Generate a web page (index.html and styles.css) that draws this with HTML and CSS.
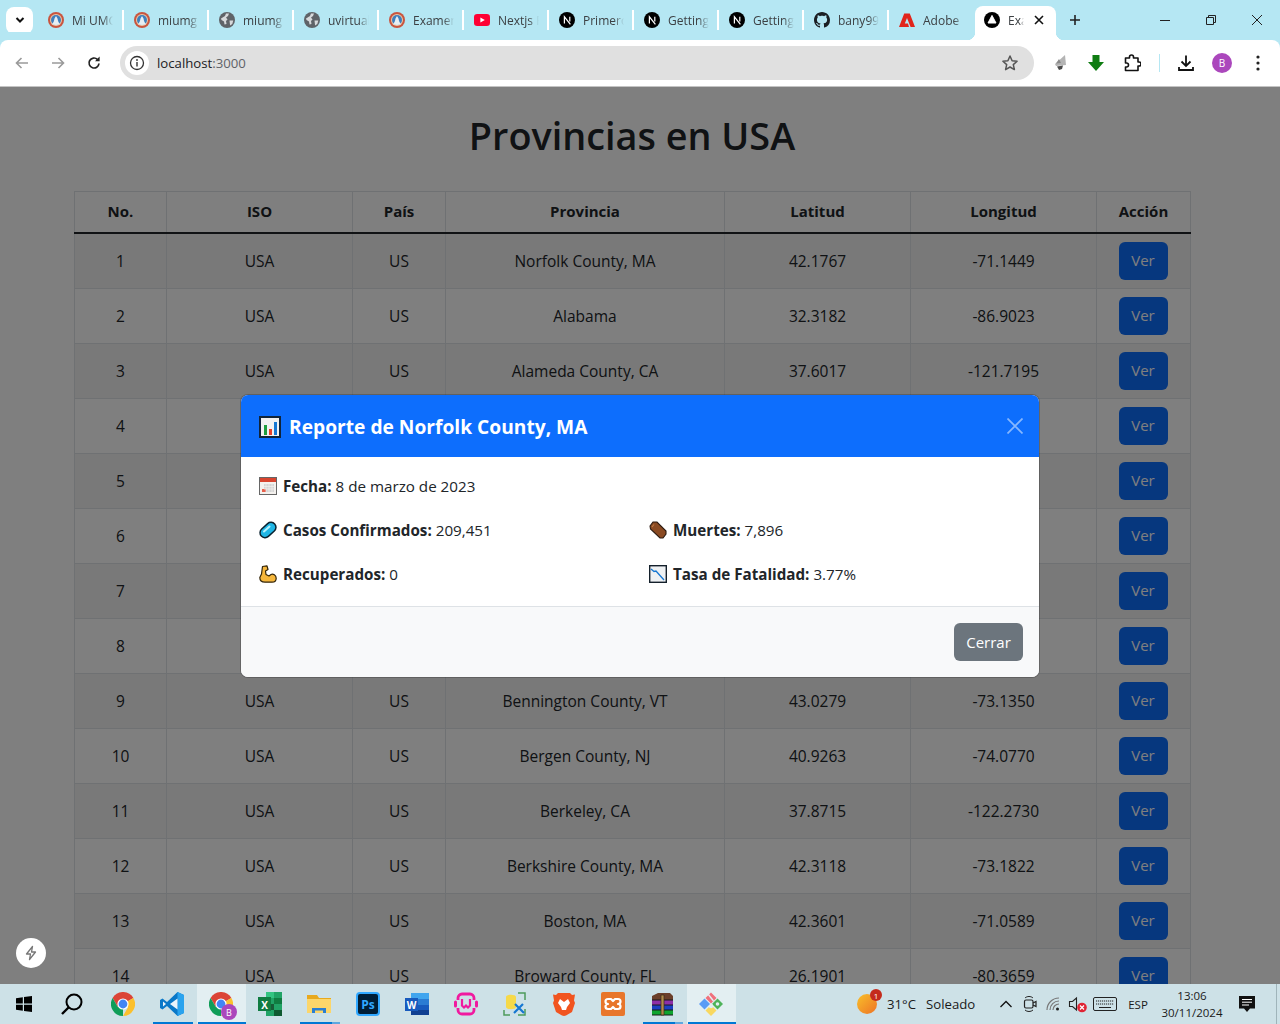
FILE: index.html
```html
<!DOCTYPE html>
<html lang="es">
<head>
    <meta charset="UTF-8">
    <meta name="viewport" content="width=device-width, initial-scale=1.0">
    <title>Provincias en USA</title>
    <link rel="stylesheet" href="styles.css">
</head>
<body>
    <svg class="sprites" aria-hidden="true">
        <symbol id="fav-umg" viewBox="0 0 16 16">
            <circle cx="8" cy="8" r="8" fill="#c9553f"/>
            <circle cx="8" cy="8" r="6" fill="#e9c9a8"/>
            <circle cx="8" cy="8" r="5" fill="#3f7fbd"/>
            <path d="M4 12c1.500-1 2-3 2.500-5.500L8 4l1.500 2.500C10 9 10.500 11 12 12c-2.500 1.300-5.500 1.300-8 0z" fill="#e8eef2"/>
        </symbol>
        <symbol id="fav-globe" viewBox="0 0 16 16">
            <circle cx="8" cy="8" r="8" fill="#5f6368"/>
            <path d="M2 6.500 6 4 7 1.500 10 1.600 9 4 7 5.500 8.500 7.500 7 9 7.500 12 5.500 12.500 5 9.500 2.500 8zM10.500 8.500h3.800l-1 3.400-2.200 1.600z" fill="#d7d9db"/>
        </symbol>
        <symbol id="fav-yt" viewBox="0 0 16 16">
            <rect y="2" width="16" height="12" rx="3.200" fill="#ff0033"/>
            <path d="M6.400 5.400 10.800 8l-4.400 2.600z" fill="#fff"/>
        </symbol>
        <symbol id="fav-next" viewBox="0 0 16 16">
            <circle cx="8" cy="8" r="8" fill="#000"/>
            <path d="M5.400 11.400V4.800l6 7.600M10.800 4.800v4.600" fill="none" stroke="#fff" stroke-width="1.200"/>
        </symbol>
        <symbol id="fav-github" viewBox="0 0 16 16">
            <path d="M8 0C3.58 0 0 3.58 0 8c0 3.54 2.29 6.53 5.47 7.59.4.07.55-.17.55-.38 0-.19-.01-.82-.01-1.49-2.01.37-2.53-.49-2.69-.94-.09-.23-.48-.94-.82-1.13-.28-.15-.68-.52-.01-.53.63-.01 1.08.58 1.23.82.72 1.21 1.87.87 2.33.66.07-.52.28-.87.51-1.07-1.78-.2-3.64-.89-3.64-3.95 0-.87.31-1.59.82-2.15-.08-.2-.36-1.02.08-2.12 0 0 .67-.21 2.2.82.64-.18 1.32-.27 2-.27.68 0 1.36.09 2 .27 1.53-1.04 2.2-.82 2.2-.82.44 1.1.16 1.92.08 2.12.51.56.82 1.27.82 2.15 0 3.07-1.87 3.75-3.65 3.95.29.25.54.73.54 1.48 0 1.07-.01 1.93-.01 2.2 0 .21.15.46.55.38A8.013 8.013 0 0016 8c0-4.42-3.58-8-8-8z" fill="#1b1f23"/>
        </symbol>
        <symbol id="fav-adobe" viewBox="0 0 16 16">
            <path d="M5.200 1.500h5.600L16 15h-4.400L8 6 5.800 11.500H9l1 3.500H0z" fill="#e1251b"/>
        </symbol>
        <symbol id="fav-active" viewBox="0 0 16 16">
            <circle cx="8" cy="8" r="8" fill="#000"/>
            <path d="M8 3.400 12 11H4z" fill="#fff" stroke="#fff" stroke-linejoin="round"/>
        </symbol>
        <symbol id="chrome" viewBox="0 0 24 24">
            <path d="M12 12 22.400 6A12 12 0 0 0 1.600 6L6.800 15z" fill="#db4437"/>
            <path d="M12 12 6.800 15 1.600 6A12 12 0 0 0 12 24z" fill="#0f9d58"/>
            <path d="M12 12 22.400 6A12 12 0 0 1 12 24l5.200-9z" fill="#fbc02d"/>
            <circle cx="12" cy="12" r="5.600" fill="#fff"/>
            <circle cx="12" cy="12" r="4.400" fill="#4285f4"/>
        </symbol>
    </svg>

    <header class="tabstrip">
        <button class="tab-search">
            <svg width="12" height="12" viewBox="0 0 12 12"><path d="M2.500 4 6 7.500 9.500 4" fill="none" stroke="#111" stroke-width="2"/></svg>
        </button>
        <div class="tab tab-first"><svg class="favicon"><use href="#fav-umg"/></svg><span class="tab-title">Mi UMG</span></div>
        <div class="tab"><svg class="favicon"><use href="#fav-umg"/></svg><span class="tab-title">miumg</span></div>
        <div class="tab"><svg class="favicon"><use href="#fav-globe"/></svg><span class="tab-title">miumg</span></div>
        <div class="tab"><svg class="favicon"><use href="#fav-globe"/></svg><span class="tab-title">uvirtual</span></div>
        <div class="tab"><svg class="favicon"><use href="#fav-umg"/></svg><span class="tab-title">Examen</span></div>
        <div class="tab"><svg class="favicon"><use href="#fav-yt"/></svg><span class="tab-title">Nextjs Fu</span></div>
        <div class="tab"><svg class="favicon"><use href="#fav-next"/></svg><span class="tab-title">Primeros</span></div>
        <div class="tab"><svg class="favicon"><use href="#fav-next"/></svg><span class="tab-title">Getting</span></div>
        <div class="tab"><svg class="favicon"><use href="#fav-next"/></svg><span class="tab-title">Getting</span></div>
        <div class="tab"><svg class="favicon"><use href="#fav-github"/></svg><span class="tab-title">bany99</span></div>
        <div class="tab tab-last"><svg class="favicon"><use href="#fav-adobe"/></svg><span class="tab-title">Adobe</span></div>
        <div class="tab-active">
            <svg class="favicon"><use href="#fav-active"/></svg>
            <span class="tab-title tab-title-short">Exa</span>
            <svg class="tab-close" width="10" height="10" viewBox="0 0 10 10"><path d="M1 1l8 8M9 1 1 9" stroke="#111" stroke-width="1.600"/></svg>
        </div>
        <svg class="new-tab" width="12" height="12" viewBox="0 0 12 12"><path d="M6 1v10M1 6h10" stroke="#222" stroke-width="1.600"/></svg>
        <div class="window-controls">
            <svg width="46" height="12" viewBox="0 0 46 12"><path d="M18 6.500h10" stroke="#222"/></svg>
            <svg width="46" height="12" viewBox="0 0 46 12"><path d="M18.500 3.500h7v7h-7zM20.500 3.500v-2h7v7h-2" fill="none" stroke="#222"/></svg>
            <svg width="46" height="12" viewBox="0 0 46 12"><path d="M18 1l10 10M28 1 18 11" stroke="#222"/></svg>
        </div>
    </header>

    <nav class="toolbar">
        <button class="tool"><svg width="16" height="16" viewBox="0 0 16 16"><path d="M14 8H3M7.500 3 2.500 8l5 5" fill="none" stroke="#9a9a9a" stroke-width="1.600"/></svg></button>
        <button class="tool"><svg width="16" height="16" viewBox="0 0 16 16"><path d="M2 8h11M8.500 3l5 5-5 5" fill="none" stroke="#9a9a9a" stroke-width="1.600"/></svg></button>
        <button class="tool"><svg width="16" height="16" viewBox="0 0 16 16"><path d="M13 8.500A5 5 0 1 1 11.400 4.300" fill="none" stroke="#222" stroke-width="1.700"/><path d="M13.600 1.600v4.600H9z" fill="#222"/></svg></button>
        <div class="omnibox">
            <span class="site-info">
                <svg width="16" height="16" viewBox="0 0 16 16"><circle cx="8" cy="8" r="6.500" fill="none" stroke="#333" stroke-width="1.300"/><path d="M8 7v4.400" stroke="#333" stroke-width="1.400"/><circle cx="8" cy="5" r=".9" fill="#333"/></svg>
            </span>
            <span class="url">localhost<span class="url-port">:3000</span></span>
            <svg class="star" width="18" height="18" viewBox="0 0 18 18"><path d="m9 2 2.100 4.700 5 .5-3.800 3.400 1.100 5L9 13l-4.400 2.600 1.100-5L1.900 7.200l5-.5z" fill="none" stroke="#555" stroke-width="1.500" stroke-linejoin="round"/></svg>
        </div>
        <button class="tool tool-first"><svg width="18" height="18" viewBox="0 0 18 18"><path d="M13 1 3 10l1 2 10-1z" fill="#b4b4b4"/><path d="M7 5 4 9.500l5-.5z" fill="#8a8a8a"/><path d="M5 12.500l6-1-1 3.500-3 1z" fill="#4a4a4a"/></svg></button>
        <button class="tool"><svg width="18" height="18" viewBox="0 0 18 18"><path d="M5.500 1h7v7H17l-8 9-8-9h4.500z" fill="#0f7d12"/></svg></button>
        <button class="tool"><svg width="18" height="18" viewBox="0 0 18 18"><path d="M2.500 4H6.500V3a2 2 0 0 1 4 0v1h4.500v4h1a2 2 0 0 1 0 4h-1v4.500H2.500v-3.500h1a2 2 0 0 0 0-4h-1z" fill="none" stroke="#111" stroke-width="1.600" stroke-linejoin="round"/></svg></button>
        <span class="tool-sep"></span>
        <button class="tool"><svg width="18" height="18" viewBox="0 0 18 18"><path d="M9 1.500v10M4.500 7.500 9 12l4.500-4.500" fill="none" stroke="#111" stroke-width="1.800"/><path d="M2 13v3h14v-3" fill="none" stroke="#111" stroke-width="1.800"/></svg></button>
        <button class="tool"><span class="avatar">B</span></button>
        <button class="tool"><svg width="4" height="16" viewBox="0 0 4 16"><circle cx="2" cy="2" r="1.600" fill="#222"/><circle cx="2" cy="8" r="1.600" fill="#222"/><circle cx="2" cy="14" r="1.600" fill="#222"/></svg></button>
    </nav>

    <main class="viewport">
        <div class="page">
            <h1 class="page-title">Provincias en USA</h1>
            <table class="table">
                <colgroup>
                    <col class="col-no">
                    <col class="col-m">
                    <col class="col-s">
                    <col class="col-l">
                    <col class="col-m">
                    <col class="col-m">
                    <col class="col-action">
                </colgroup>
                <thead>
                    <tr><th>No.</th><th>ISO</th><th>País</th><th>Provincia</th><th>Latitud</th><th>Longitud</th><th>Acción</th></tr>
                </thead>
                <tbody>
                    <tr><td>1</td><td>USA</td><td>US</td><td>Norfolk County, MA</td><td>42.1767</td><td>-71.1449</td><td><button class="btn-ver">Ver</button></td></tr>
                    <tr><td>2</td><td>USA</td><td>US</td><td>Alabama</td><td>32.3182</td><td>-86.9023</td><td><button class="btn-ver">Ver</button></td></tr>
                    <tr><td>3</td><td>USA</td><td>US</td><td>Alameda County, CA</td><td>37.6017</td><td>-121.7195</td><td><button class="btn-ver">Ver</button></td></tr>
                    <!-- filas 4 a 8 quedan tapadas por el modal -->
                    <tr><td>4</td><td></td><td></td><td></td><td></td><td></td><td><button class="btn-ver">Ver</button></td></tr>
                    <tr><td>5</td><td></td><td></td><td></td><td></td><td></td><td><button class="btn-ver">Ver</button></td></tr>
                    <tr><td>6</td><td></td><td></td><td></td><td></td><td></td><td><button class="btn-ver">Ver</button></td></tr>
                    <tr><td>7</td><td></td><td></td><td></td><td></td><td></td><td><button class="btn-ver">Ver</button></td></tr>
                    <tr><td>8</td><td></td><td></td><td></td><td></td><td></td><td><button class="btn-ver">Ver</button></td></tr>
                    <tr><td>9</td><td>USA</td><td>US</td><td>Bennington County, VT</td><td>43.0279</td><td>-73.1350</td><td><button class="btn-ver">Ver</button></td></tr>
                    <tr><td>10</td><td>USA</td><td>US</td><td>Bergen County, NJ</td><td>40.9263</td><td>-74.0770</td><td><button class="btn-ver">Ver</button></td></tr>
                    <tr><td>11</td><td>USA</td><td>US</td><td>Berkeley, CA</td><td>37.8715</td><td>-122.2730</td><td><button class="btn-ver">Ver</button></td></tr>
                    <tr><td>12</td><td>USA</td><td>US</td><td>Berkshire County, MA</td><td>42.3118</td><td>-73.1822</td><td><button class="btn-ver">Ver</button></td></tr>
                    <tr><td>13</td><td>USA</td><td>US</td><td>Boston, MA</td><td>42.3601</td><td>-71.0589</td><td><button class="btn-ver">Ver</button></td></tr>
                    <tr><td>14</td><td>USA</td><td>US</td><td>Broward County, FL</td><td>26.1901</td><td>-80.3659</td><td><button class="btn-ver">Ver</button></td></tr>
                </tbody>
            </table>
        </div>

        <div class="backdrop"></div>

        <section class="modal">
            <header class="modal-header">
                <h2 class="modal-title">
                    <svg class="emoji-title" width="22" height="22" viewBox="0 0 22 22"><rect x="1" y="1" width="20" height="20" fill="#f2f2f2" stroke="#10243a" stroke-width="2"/><path d="M5 9h3v10H5z" fill="#1e9e3e"/><path d="M10 13h3v6h-3z" fill="#e8412a"/><path d="M15 6h3v13h-3z" fill="#1677d2"/></svg>
                    Reporte de Norfolk County, MA
                </h2>
                <svg class="modal-close" width="16" height="16" viewBox="0 0 16 16"><path d="M.5.5l15 15M15.500.5l-15 15" stroke="#fff" stroke-width="1.700"/></svg>
            </header>
            <div class="modal-body">
                <p class="stat stat-wide">
                    <svg class="emoji" width="18" height="18" viewBox="0 0 18 18"><rect x=".5" y=".5" width="17" height="17" fill="#f4f1ee" stroke="#666"/><rect x="1" y="1" width="16" height="4" fill="#d8442f"/><path d="M5 7h10v8H5z" fill="#d5d5d5"/><path d="M3 12h4v3H3z" fill="#e8604c"/><path d="M7 7v8M10 7v8M13 7v8M5 9.500h10M5 12h10" stroke="#f4f1ee" stroke-width=".7"/></svg><strong>Fecha:</strong> 8 de marzo de 2023
                </p>
                <p class="stat">
                    <svg class="emoji" width="18" height="18" viewBox="0 0 18 18"><rect x="0" y="4" width="18" height="10" rx="5" transform="rotate(-42 9 9)" fill="#1fb6e6" stroke="#0a2230" stroke-width="1.500"/><path d="M5 10.500 10.500 5.500" stroke="#b4f0fc" stroke-width="2" stroke-linecap="round"/></svg><strong>Casos Confirmados:</strong> 209,451
                </p>
                <p class="stat">
                    <svg class="emoji" width="18" height="18" viewBox="0 0 18 18"><path d="M1 5 4 1h4l9 9v3l-3 4h-3L1.500 8z" fill="#8a4a22" stroke="#2b1a10" stroke-width="1.100"/><path d="M5 3.500 3 6" stroke="#c07a44" stroke-width="1.200"/></svg><strong>Muertes:</strong> 7,896
                </p>
                <p class="stat">
                    <svg class="emoji" width="18" height="18" viewBox="0 0 18 18"><path d="M8 .8 3.500 1.500 2.500 9 .8 12.500C.8 15.500 3 17.200 6 17.200h7c3 0 4.200-2 4.200-4 0-3-3.200-4.700-5.200-3.700L10 11 7 9.500 6.500 6 9 4.500z" fill="#f6b73c" stroke="#33250a" stroke-width="1.200" stroke-linejoin="round"/></svg><strong>Recuperados:</strong> 0
                </p>
                <p class="stat">
                    <svg class="emoji" width="18" height="18" viewBox="0 0 18 18"><rect x=".7" y=".7" width="16.600" height="16.600" fill="#eef1f3" stroke="#14202b" stroke-width="1.400"/><path d="M2 4 5 6.500 7 6 15 15" fill="none" stroke="#1677d2" stroke-width="1.300"/></svg><strong>Tasa de Fatalidad:</strong> 3.77%
                </p>
            </div>
            <footer class="modal-footer">
                <button class="btn-close-modal">Cerrar</button>
            </footer>
        </section>

        <div class="dev-indicator">
            <svg width="16" height="16" viewBox="0 0 16 16"><path d="M9.500 1.500 3.500 9h4l-1 5.500L12.500 7h-4z" fill="none" stroke="#777" stroke-width="1.300" stroke-linejoin="round"/></svg>
        </div>
    </main>

    <footer class="taskbar">
        <div class="task task-start"><svg width="18" height="18" viewBox="0 0 18 18"><path d="M1 3.300 7.800 2.300v6.200H1zM9 2.100 17 1v7.500H9zM1 9.700h6.800v6.100L1 14.800zM9 9.700h8V17l-8-1.100z" fill="#000"/></svg></div>
        <div class="task task-start"><svg width="24" height="24" viewBox="0 0 24 24"><circle cx="14" cy="10" r="7.500" fill="none" stroke="#000" stroke-width="2"/><path d="M8.500 15.500 2 22" stroke="#000" stroke-width="2.400"/></svg></div>
        <div class="task task-first"><svg width="24" height="24"><use href="#chrome"/></svg></div>
        <div class="task task-open"><svg width="24" height="24" viewBox="0 0 24 24"><path d="M17.500 0 24 3v18l-6.500 3L7 14 2.500 17.500 0 16V8l2.500-1.500L7 10z" fill="#0a78c8"/><path d="M17.500 0 24 3v18l-6.500 3z" fill="#2aa3ee"/><path d="M17.500 6.500v11L10 12z" fill="#fff" fill-opacity=".92"/><path d="M3 9.500v5L6 12z" fill="#fff" fill-opacity=".92"/></svg></div>
        <div class="task task-active">
            <span class="task-badged"><svg width="24" height="24"><use href="#chrome"/></svg><span class="avatar avatar-small">B</span></span>
        </div>
        <div class="task"><svg width="24" height="24" viewBox="0 0 24 24"><path d="M8 0h16v24H8z" fill="#21a366"/><path d="M8 0h8v6H8z" fill="#33c481"/><path d="M16 6h8v6h-8z" fill="#107c41"/><path d="M8 12h8v6H8z" fill="#185c37"/><path d="M16 18h8v6h-8z" fill="#0f5a30"/><rect y="5" width="13" height="14" fill="#107c41"/><text class="icon-letter" x="6.500" y="16.500">X</text></svg></div>
        <div class="task task-stacked"><svg width="24" height="24" viewBox="0 0 24 24"><path d="M0 3h10l2 3h12v15H0z" fill="#e8a91e"/><path d="M0 7h24v14H0z" fill="#fcd66a"/><path d="M5 16h14v5h-3v-2.500H8V21H5z" fill="#2a7fd1"/></svg></div>
        <div class="task"><svg width="24" height="24" viewBox="0 0 24 24"><rect x="1" y="1" width="22" height="22" rx="3" fill="#001e36" stroke="#31a8ff" stroke-width="2"/><text class="icon-letter icon-ps" x="12" y="17">Ps</text></svg></div>
        <div class="task"><svg width="24" height="24" viewBox="0 0 24 24"><path d="M6 1h18v22H6z" fill="#2b7cd3"/><path d="M6 1h18v6H6z" fill="#41a5ee"/><path d="M6 13h18v5H6z" fill="#185abd"/><path d="M6 18h18v5H6z" fill="#103f91"/><rect y="6" width="13" height="13" fill="#185abd"/><text class="icon-letter" x="6.500" y="17">W</text></svg></div>
        <div class="task"><svg width="24" height="24" viewBox="0 0 24 24"><path d="M4 8V6a4 4 0 0 1 4-4h8a4 4 0 0 1 4 4v2M4 16v2a4 4 0 0 0 4 4h8a4 4 0 0 0 4-4v-2" fill="none" stroke="#f0199f" stroke-width="2.800"/><path d="M1.500 10v4M22.500 10v4" stroke="#f0199f" stroke-width="3" stroke-linecap="round"/><path d="M8 7v6.500l2 2 2-2 2 2 2-2V7" fill="none" stroke="#f0199f" stroke-width="2.200"/></svg></div>
        <div class="task"><svg width="24" height="24" viewBox="0 0 24 24"><path d="M3 5c0-3 10-3 10 0v10c0 3-10 3-10 0z" fill="#f6d94a"/><path d="M15 1h7v7M22 17v6h-7M1 18v5h6" fill="none" stroke="#4d9a5c" stroke-width="1.500"/><path d="M11 21l9-9M12 12l9 9" stroke="#1677d2" stroke-width="2.200"/></svg></div>
        <div class="task"><svg width="22" height="24" viewBox="0 0 22 24"><path d="M5 1h12l2 2 3-.5-1 6L22 11l-3 9-6 3.500L11 24l-2-.5L3 20 0 11l1-2.500-1-6L3 3z" fill="#f1541f"/><path d="M11 10 7 7l-2 4 3 4 1 3h4l1-3 3-4-2-4z" fill="#fff"/></svg></div>
        <div class="task"><svg width="24" height="24" viewBox="0 0 24 24"><rect width="24" height="24" rx="2" fill="#e8762b"/><path d="M10 7H7a2.500 2.500 0 0 0 0 5 2.500 2.500 0 0 0 0 5h3l2-2 2 2h3a2.500 2.500 0 0 0 0-5 2.500 2.500 0 0 0 0-5h-3l-2 2z" fill="none" stroke="#fff" stroke-width="2.200" stroke-linejoin="round"/></svg></div>
        <div class="task task-stacked"><svg width="24" height="24" viewBox="0 0 24 24"><path d="M2 4 8 1h12l3 3v4H2z" fill="#6b3f2a"/><path d="M2 8h21v5H2z" fill="#8d2fa8"/><path d="M2 13h21v5H2z" fill="#1b3fc4"/><path d="M2 18h21v5H2z" fill="#0ea52f"/><path d="M2 8h21M2 13h21M2 18h21M2 23h21" stroke="#1a1a1a"/><path d="M11 3h3v20h-3z" fill="#b08a4a" stroke="#3a2a18" stroke-width=".7"/></svg></div>
        <div class="task task-active"><svg width="26" height="26" viewBox="0 0 26 26"><path d="m14 13 5.500-5.500L25 13l-5.500 5.500z" fill="#4fb35a"/><circle cx="19.500" cy="13" r="1.800" fill="#e3eff2"/><path d="m7.500 7 5.500-5.500L18.500 7 13 12.500z" fill="#f0707c"/><path d="m10 3 5.500 7" stroke="#e3eff2" stroke-width="1.400"/><path d="m13 14 5.500 5.500L13 25l-5.500-5.500z" fill="#f8d860"/><circle cx="13" cy="15" r="2.200" fill="#e3eff2"/><path d="m6.500 7.500L12 13l-5.500 5.500L1 13z" fill="#5b9cf5"/></svg></div>

        <div class="tray">
            <div class="weather">
                <span class="weather-orb"><span class="weather-badge">1</span></span>
                <span>31°C</span>
                <span>Soleado</span>
            </div>
            <div class="tray-icon"><svg width="14" height="14" viewBox="0 0 14 14"><path d="M1.500 10 7 4.500l5.500 5.500" fill="none" stroke="#111" stroke-width="1.300"/></svg></div>
            <div class="tray-icon"><svg width="16" height="18" viewBox="0 0 16 18"><path d="M3 3c2-2 6-2 8 0M3 15c2 2 6 2 8 0" fill="none" stroke="#222"/><rect x="2.500" y="5" width="8.500" height="8" rx="1.500" fill="none" stroke="#222" stroke-width="1.200"/><path d="M11 8l3-1.500v5L11 10" fill="none" stroke="#222" stroke-width="1.200"/></svg></div>
            <div class="tray-icon"><svg width="18" height="16" viewBox="0 0 18 16"><path d="M2 14A12 12 0 0 1 14 2M5 14a9 9 0 0 1 9-9M8 14a6 6 0 0 1 6-6" fill="none" stroke="#777" stroke-width="1.200"/><circle cx="12.500" cy="13" r="1.500" fill="#222"/></svg></div>
            <div class="tray-icon tray-volume"><svg width="20" height="18" viewBox="0 0 20 18"><path d="M1.500 6.500h3L8.500 3v12l-4-3.500h-3z" fill="none" stroke="#222" stroke-width="1.100"/><circle cx="14" cy="12.500" r="4.800" fill="#e02434"/><path d="m12 10.500 4 4M16 10.500l-4 4" stroke="#fff" stroke-width="1.200"/></svg></div>
            <div class="tray-icon tray-keyboard"><svg width="24" height="14" viewBox="0 0 24 14"><rect x=".5" y=".5" width="23" height="13" rx="1.500" fill="none" stroke="#222"/><path d="M3 4h18M3 7h18" stroke="#222" stroke-dasharray="1.200 .8"/><path d="M6 10.500h12" stroke="#222"/></svg></div>
            <div class="tray-lang">ESP</div>
            <div class="tray-clock"><span>13:06</span><span>30/11/2024</span></div>
            <div class="tray-notify"><svg width="18" height="18" viewBox="0 0 18 18"><path d="M1 1h16v12.500h-5L9 17l-3-3.500H1z" fill="#111"/><path d="M4 4.500h10M4 7.200h10M4 10h7" stroke="#fff"/></svg></div>
            <div class="show-desktop"></div>
        </div>
    </footer>
</body>
</html>
```

FILE: styles.css
```css
* {
    box-sizing: border-box;
}

html, body {
    height: 100%;
}

body {
    margin: 0;
    height: 100vh;
    display: flex;
    flex-direction: column;
    overflow: hidden;
    font-family: "Open Sans", "Noto Sans", sans-serif;
    color: #212529;
    background-color: #fff;
}

button {
    font-family: inherit;
    border: none;
    background: none;
    padding: 0;
}

.sprites {
    display: none;
}

/* browser chrome */

.tabstrip {
    height: 40px;
    flex: none;
    display: flex;
    align-items: center;
    background-color: #b5e7f3;
}

.tab-search {
    width: 27px;
    height: 27px;
    margin-left: 6px;
    margin-right: 5px;
    border-radius: 8px;
    background-color: #fff;
    display: flex;
    align-items: center;
    justify-content: center;
}

.tab {
    width: 85px;
    height: 20px;
    display: flex;
    align-items: center;
    gap: 8px;
    padding-left: 10px;
    border-right: 2px solid #fff;
}

.tab-first {
    width: 86px;
}

.tab-last {
    border-right: none;
}

.favicon {
    width: 16px;
    height: 16px;
    flex: none;
}

.tab-title {
    width: 41px;
    flex: none;
    overflow: hidden;
    white-space: nowrap;
    font-size: 12px;
    color: #3c4043;
    -webkit-mask-image: linear-gradient(to right, #000 75%, transparent);
    mask-image: linear-gradient(to right, #000 75%, transparent);
}

.tab-title-short {
    width: 16px;
}

.tab-active {
    position: relative;
    width: 81px;
    height: 34px;
    align-self: flex-end;
    margin-left: 1px;
    padding: 0 0 6px 9px;
    display: flex;
    align-items: center;
    gap: 8px;
    background-color: #fff;
    border-radius: 8px 8px 0 0;
}

.tab-active::before,
.tab-active::after {
    content: "";
    position: absolute;
    bottom: 0;
    width: 8px;
    height: 8px;
}

.tab-active::before {
    left: -8px;
    background: radial-gradient(circle at 0 0, transparent 8px, #fff 8.5px);
}

.tab-active::after {
    right: -8px;
    background: radial-gradient(circle at 100% 0, transparent 8px, #fff 8.5px);
}

.tab-close {
    margin-left: 2px;
}

.new-tab {
    margin-left: 13px;
}

.window-controls {
    margin-left: auto;
    display: flex;
}

.toolbar {
    height: 47px;
    flex: none;
    display: flex;
    align-items: center;
    padding: 0 4px 1px;
    background-color: #fff;
    border-bottom: 1px solid #c4c4c4;
    border-radius: 8px 8px 0 0;
}

.tabstrip + .toolbar {
    box-shadow: 0 -8px 0 #b5e7f3;
}

.tool {
    width: 36px;
    height: 34px;
    flex: none;
    display: flex;
    align-items: center;
    justify-content: center;
}

.tool-first {
    margin-left: 9px;
    margin-right: -1px;
}

.tool-sep {
    width: 1px;
    height: 18px;
    margin: 0 8px 0 9px;
    flex: none;
    background-color: #b5e7f3;
}

.omnibox {
    flex: 1;
    height: 34px;
    margin-left: 8px;
    display: flex;
    align-items: center;
    padding: 0 15px 0 5px;
    border-radius: 17px;
    background-color: #e0e0e0;
}

.site-info {
    width: 24px;
    height: 24px;
    display: flex;
    align-items: center;
    justify-content: center;
    border-radius: 50%;
    background-color: #fff;
}

.url {
    margin-left: 8px;
    font-size: 13.2px;
    color: #202124;
}

.url-port {
    color: #5f6368;
}

.star {
    margin-left: auto;
}

.avatar {
    width: 20px;
    height: 20px;
    display: flex;
    align-items: center;
    justify-content: center;
    border-radius: 50%;
    font-size: 10px;
    color: #fff;
    background-color: #ab47bc;
}

/* page */

.viewport {
    position: relative;
    flex: 1;
    min-height: 0;
    overflow: hidden;
}

.page {
    padding: 0 90px 0 74px;
}

.page-title {
    margin: 0;
    padding: 25px 0 31px;
    font-size: 37.8px;
    line-height: 48px;
    font-weight: 600;
    text-align: center;
}

.table {
    width: 100%;
    table-layout: fixed;
    border-collapse: collapse;
    font-size: 15.5px;
}

.col-no {
    width: 92px;
}

.col-s {
    width: 93px;
}

.col-m {
    width: 186px;
}

.col-l {
    width: 279px;
}

.col-action {
    width: 94px;
}

.table th,
.table td {
    padding: 8px;
    border: 1px solid #dee2e6;
    text-align: center;
    vertical-align: middle;
    line-height: 24px;
}

.table th {
    padding: 7px 8px 9px;
    border-bottom: 2px solid #212529;
    font-size: 15px;
    font-weight: 700;
}

.table td {
    height: 55px;
}

.table tbody tr:nth-child(odd) td {
    background-color: #f2f2f2;
}

.btn-ver {
    width: 49px;
    height: 38px;
    margin-right: 1px;
    padding-bottom: 2px;
    border-radius: 6px;
    font-size: 15px;
    color: #fff;
    background-color: #0d6efd;
    vertical-align: middle;
}

.backdrop {
    position: absolute;
    inset: 0;
    background-color: rgba(0, 0, 0, 0.5);
}

.modal {
    position: absolute;
    top: 307px;
    left: 240px;
    width: 800px;
    overflow: hidden;
    border: 1px solid rgba(0, 0, 0, 0.2);
    border-radius: 8px;
    background-color: #fff;
    background-clip: padding-box;
}

.modal-header {
    height: 62px;
    display: flex;
    align-items: center;
    justify-content: space-between;
    padding: 0 16px 0 18px;
    background-color: #0d6efd;
}

.modal-title {
    margin: 0;
    padding-top: 1px;
    display: flex;
    align-items: center;
    gap: 8px;
    font-size: 19.2px;
    line-height: 24px;
    font-weight: 700;
    color: #fff;
}

.modal-close {
    opacity: 0.5;
}

.modal-body {
    display: grid;
    grid-template-columns: 390px 1fr;
    row-gap: 20px;
    padding: 17px 18px 20px;
    font-size: 15.2px;
    line-height: 24px;
}

.stat {
    margin: 0;
    white-space: nowrap;
}

.stat-wide {
    grid-column: 1 / -1;
}

.stat strong {
    font-weight: 700;
}

.emoji {
    margin-right: 6px;
    vertical-align: -3px;
}

.modal-footer {
    display: flex;
    justify-content: flex-end;
    padding: 16px;
    background-color: #f8f9fa;
    border-top: 1px solid #dee2e6;
}

.btn-close-modal {
    width: 69px;
    height: 38px;
    border-radius: 6px;
    font-size: 15px;
    color: #fff;
    background-color: #6c757d;
}

.dev-indicator {
    position: absolute;
    left: 16px;
    bottom: 16px;
    width: 30px;
    height: 30px;
    display: flex;
    align-items: center;
    justify-content: center;
    border-radius: 50%;
    background-color: #fff;
}

/* windows taskbar */

.taskbar {
    height: 40px;
    flex: none;
    display: flex;
    background-color: #cde1e7;
}

.task {
    position: relative;
    width: 49px;
    display: flex;
    align-items: center;
    justify-content: center;
}

.task-start {
    width: 48px;
}

.task-first {
    margin-left: 2.5px;
}

.task-open::after,
.task-stacked::after,
.task-active::after {
    content: "";
    position: absolute;
    bottom: 0;
    left: 5px;
    right: 4px;
    height: 2px;
    background-color: #0078d4;
}

.task-stacked::after {
    background: linear-gradient(to right, #0078d4 80%, #5fa8e0 80%);
}

.task-active {
    background-color: #e3eff2;
}

.task-active::after {
    left: 1px;
    right: 0;
}

.task-badged {
    position: relative;
    display: flex;
}

.avatar-small {
    position: absolute;
    right: -4px;
    bottom: -4px;
    width: 16px;
    height: 16px;
    font-size: 9px;
}

.icon-letter {
    font-family: "Open Sans", sans-serif;
    font-size: 10px;
    font-weight: 700;
    fill: #fff;
    text-anchor: middle;
}

.icon-ps {
    font-size: 12px;
    fill: #31a8ff;
}

.tray {
    margin-left: auto;
    display: flex;
    align-items: center;
    height: 100%;
    font-size: 11.5px;
    color: #1a1a1a;
}

.weather {
    width: 137px;
    display: flex;
    align-items: center;
    gap: 10px;
    font-size: 13.2px;
}

.weather-orb {
    position: relative;
    width: 20px;
    height: 20px;
    flex: none;
    border-radius: 50%;
    background: linear-gradient(135deg, #f8c02a, #ee7326);
}

.weather-badge {
    position: absolute;
    top: -5px;
    right: -5px;
    width: 12px;
    height: 12px;
    display: flex;
    align-items: center;
    justify-content: center;
    border-radius: 50%;
    font-size: 8px;
    color: #fff;
    background-color: #c42b1c;
}

.tray-icon {
    width: 24px;
    display: flex;
    justify-content: center;
}

.tray-volume {
    width: 23px;
}

.tray-keyboard {
    width: 32px;
}

.tray-lang {
    width: 34px;
    text-align: center;
}

.tray-clock {
    width: 74px;
    display: flex;
    flex-direction: column;
    align-items: center;
    line-height: 17px;
}

.tray-notify {
    width: 36px;
    display: flex;
    justify-content: center;
}

.show-desktop {
    width: 12px;
    height: 100%;
    border-right: 1px solid #9fb4ba;
    margin-right: 3px;
}
```
